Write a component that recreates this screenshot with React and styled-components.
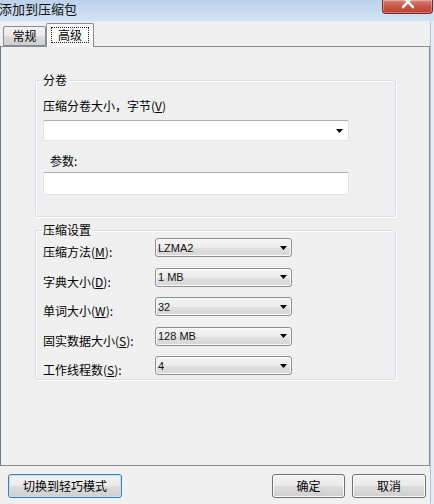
import React from "react";
import styled, { createGlobalStyle } from "styled-components";

const GlobalStyle = createGlobalStyle`
  html, body {
    margin: 0;
    padding: 0;
    background: #f0f0f0;
  }
  body {
    font-family: "Noto Sans CJK SC", "Liberation Sans", sans-serif;
    font-size: 12px;
    color: #000;
  }
  * {
    box-sizing: border-box;
  }
`;

const settings = [
  { label: "压缩方法", key: "M", value: "LZMA2" },
  { label: "字典大小", key: "D", value: "1 MB" },
  { label: "单词大小", key: "W", value: "32" },
  { label: "固实数据大小", key: "S", value: "128 MB" },
  { label: "工作线程数", key: "S", value: "4" },
];

function ArrowDown() {
  return (
    <svg width="7" height="4" viewBox="0 0 7 4">
      <path d="M0 0h7L3.5 4z" fill="#000" />
    </svg>
  );
}

function App() {
  return (
    <Window>
      <GlobalStyle />
      <TitleBar>
        <Title>添加到压缩包</Title>
        <CloseButton>
          <svg width="12" height="10" viewBox="0 0 12 10">
            <path
              d="M1 -3L11 7M11 -3L1 7"
              stroke="#fff"
              strokeWidth="2.4"
              strokeLinecap="square"
            />
          </svg>
        </CloseButton>
      </TitleBar>
      <Body>
        <Main>
          <TabStrip>
            <Tab>常规</Tab>
            <Tab $active>
              <FocusRect>高级</FocusRect>
            </Tab>
          </TabStrip>
          <TabPanel>
            <Group>
              <Legend>分卷</Legend>
              <FieldLabel>
                压缩分卷大小，字节(<u>V</u>)
              </FieldLabel>
              <EditCombo>
                <ArrowDown />
              </EditCombo>
              <FieldLabel $indent $gap={12}>
                参数:
              </FieldLabel>
              <TextBox />
            </Group>
            <Group $second>
              <Legend>压缩设置</Legend>
              <SettingsGrid>
                {settings.map((s, i) => (
                  <React.Fragment key={i}>
                    <RowLabel>
                      {s.label}(<u>{s.key}</u>):
                    </RowLabel>
                    <Select>
                      <span>{s.value}</span>
                      <ArrowDown />
                    </Select>
                  </React.Fragment>
                ))}
              </SettingsGrid>
            </Group>
          </TabPanel>
          <Footer>
            <Button $default $width={114}>
              切换到轻巧模式
            </Button>
            <ButtonGroup>
              <Button $width={73}>确定</Button>
              <Button $width={74}>取消</Button>
            </ButtonGroup>
          </Footer>
        </Main>
        <Frame />
      </Body>
    </Window>
  );
}

export default App;

const Window = styled.div`
  width: 434px;
  height: 504px;
  display: flex;
  flex-direction: column;
  background: #f0f0f0;
  overflow: hidden;
`;

const TitleBar = styled.div`
  height: 22px;
  flex: none;
  display: flex;
  align-items: flex-start;
  justify-content: space-between;
  background: linear-gradient(to bottom, #bcd2ea 0%, #c8dbef 55%, #d3e3f4 100%);
  border-bottom: 1px solid #e3edf8;
`;

const Title = styled.span`
  font-size: 13px;
  line-height: 17px;
  margin-left: -1px;
  color: #111;
`;

const CloseButton = styled.div`
  width: 51px;
  height: 14px;
  margin-right: 1px;
  display: flex;
  justify-content: center;
  align-items: flex-start;
  overflow: hidden;
  border: 1px solid #7a2a20;
  border-top: none;
  border-radius: 0 0 4px 4px;
  background: linear-gradient(to bottom, #d88478 0%, #c9594b 45%, #b8402f 100%);
  box-shadow: inset 0 0 0 1px rgba(255, 255, 255, 0.3);
`;

const Body = styled.div`
  flex: 1;
  display: flex;
`;

const Main = styled.div`
  width: 430px;
  display: flex;
  flex-direction: column;
`;

const Frame = styled.div`
  flex: 1;
  border-left: 1px solid #b4c1d0;
  background: #e6edf5;
`;

const TabStrip = styled.div`
  height: 24px;
  display: flex;
  align-items: flex-end;
  padding-left: 3px;
`;

const Tab = styled.div`
  position: relative;
  z-index: ${(p) => (p.$active ? 1 : 0)};
  width: ${(p) => (p.$active ? 48 : 43)}px;
  height: ${(p) => (p.$active ? 24 : 20)}px;
  margin-bottom: ${(p) => (p.$active ? -1 : 0)}px;
  display: flex;
  align-items: center;
  justify-content: center;
  padding-bottom: ${(p) => (p.$active ? 2 : 0)}px;
  border: 1px solid #898c95;
  border-bottom: ${(p) => (p.$active ? "none" : "1px solid #898c95")};
  border-radius: 2px 2px 0 0;
  background: ${(p) =>
    p.$active
      ? "#ffffff"
      : "linear-gradient(to bottom, #f2f2f2 0%, #ebebeb 50%, #dddddd 51%, #cfcfcf 100%)"};
  line-height: 16px;
`;

const FocusRect = styled.span`
  padding: 0 6px;
  border: 1px dotted #222;
  line-height: 14px;
`;

const TabPanel = styled.div`
  height: 420px;
  flex: none;
  border: 1px solid #898c95;
  border-left-color: #6f7885;
  background: #f0f0f0;
  padding: 25px 0 0 34px;
`;

const Group = styled.fieldset`
  width: 361px;
  margin: ${(p) => (p.$second ? "5px 0 0" : "0")};
  padding: ${(p) => (p.$second ? "0 7px 4px" : "0 7px 21px")};
  border: 1px solid #d5dfe5;
  border-radius: 3px;
  box-shadow: inset 1px 1px 0 #fff, 1px 1px 0 #fff;
  min-width: 0;
`;

const Legend = styled.legend`
  padding: 0 1px;
  margin-left: -1px;
  font-size: 12px;
  line-height: 16px;
`;

const FieldLabel = styled.div`
  margin-top: ${(p) => p.$gap || 10}px;
  margin-left: ${(p) => (p.$indent ? 7 : 0)}px;
  line-height: 16px;
  white-space: nowrap;
`;

const EditCombo = styled.div`
  width: 306px;
  height: 21px;
  margin-top: 6px;
  display: flex;
  align-items: center;
  justify-content: flex-end;
  padding-right: 5px;
  background: #fff;
  border: 1px solid #e2e3ea;
  border-top-color: #abadb3;
  border-radius: 2px;
`;

const TextBox = styled.div`
  width: 306px;
  height: 23px;
  margin-top: 3px;
  background: #fff;
  border: 1px solid #e2e3ea;
  border-top-color: #abadb3;
  border-radius: 2px;
`;

const SettingsGrid = styled.div`
  display: grid;
  grid-template-columns: 112px 137px;
  grid-auto-rows: 19px;
  row-gap: 10.5px;
`;

const RowLabel = styled.div`
  line-height: 16px;
  padding-top: 6px;
  white-space: nowrap;
`;

const Select = styled.div`
  display: flex;
  align-items: center;
  justify-content: space-between;
  padding: 0 4px 0 2px;
  border: 1px solid #8e8f8f;
  border-radius: 3px;
  background: linear-gradient(to bottom, #f4f4f4 0%, #ececec 50%, #e0e0e0 51%, #d6d6d6 100%);
  box-shadow: inset 0 0 0 1px #fafafa;
  font-family: "Liberation Sans", "Noto Sans CJK SC", sans-serif;
  font-size: 11px;
  color: #111;
`;

const Footer = styled.div`
  display: flex;
  justify-content: space-between;
  padding: 8px 4px 0 8px;
`;

const ButtonGroup = styled.div`
  display: flex;
  gap: 7px;
`;

const Button = styled.div`
  width: ${(p) => p.$width}px;
  height: 24px;
  display: flex;
  align-items: center;
  justify-content: center;
  border: 1px solid ${(p) => (p.$default ? "#3c7fb1" : "#707070")};
  border-radius: 3px;
  background: linear-gradient(to bottom, #f2f2f2 0%, #ebebeb 50%, #dddddd 51%, #cfcfcf 100%);
  box-shadow: inset 0 0 0 1px ${(p) => (p.$default ? "#bfe3f8" : "#fbfbfb")};
  line-height: 16px;
  white-space: nowrap;
`;
